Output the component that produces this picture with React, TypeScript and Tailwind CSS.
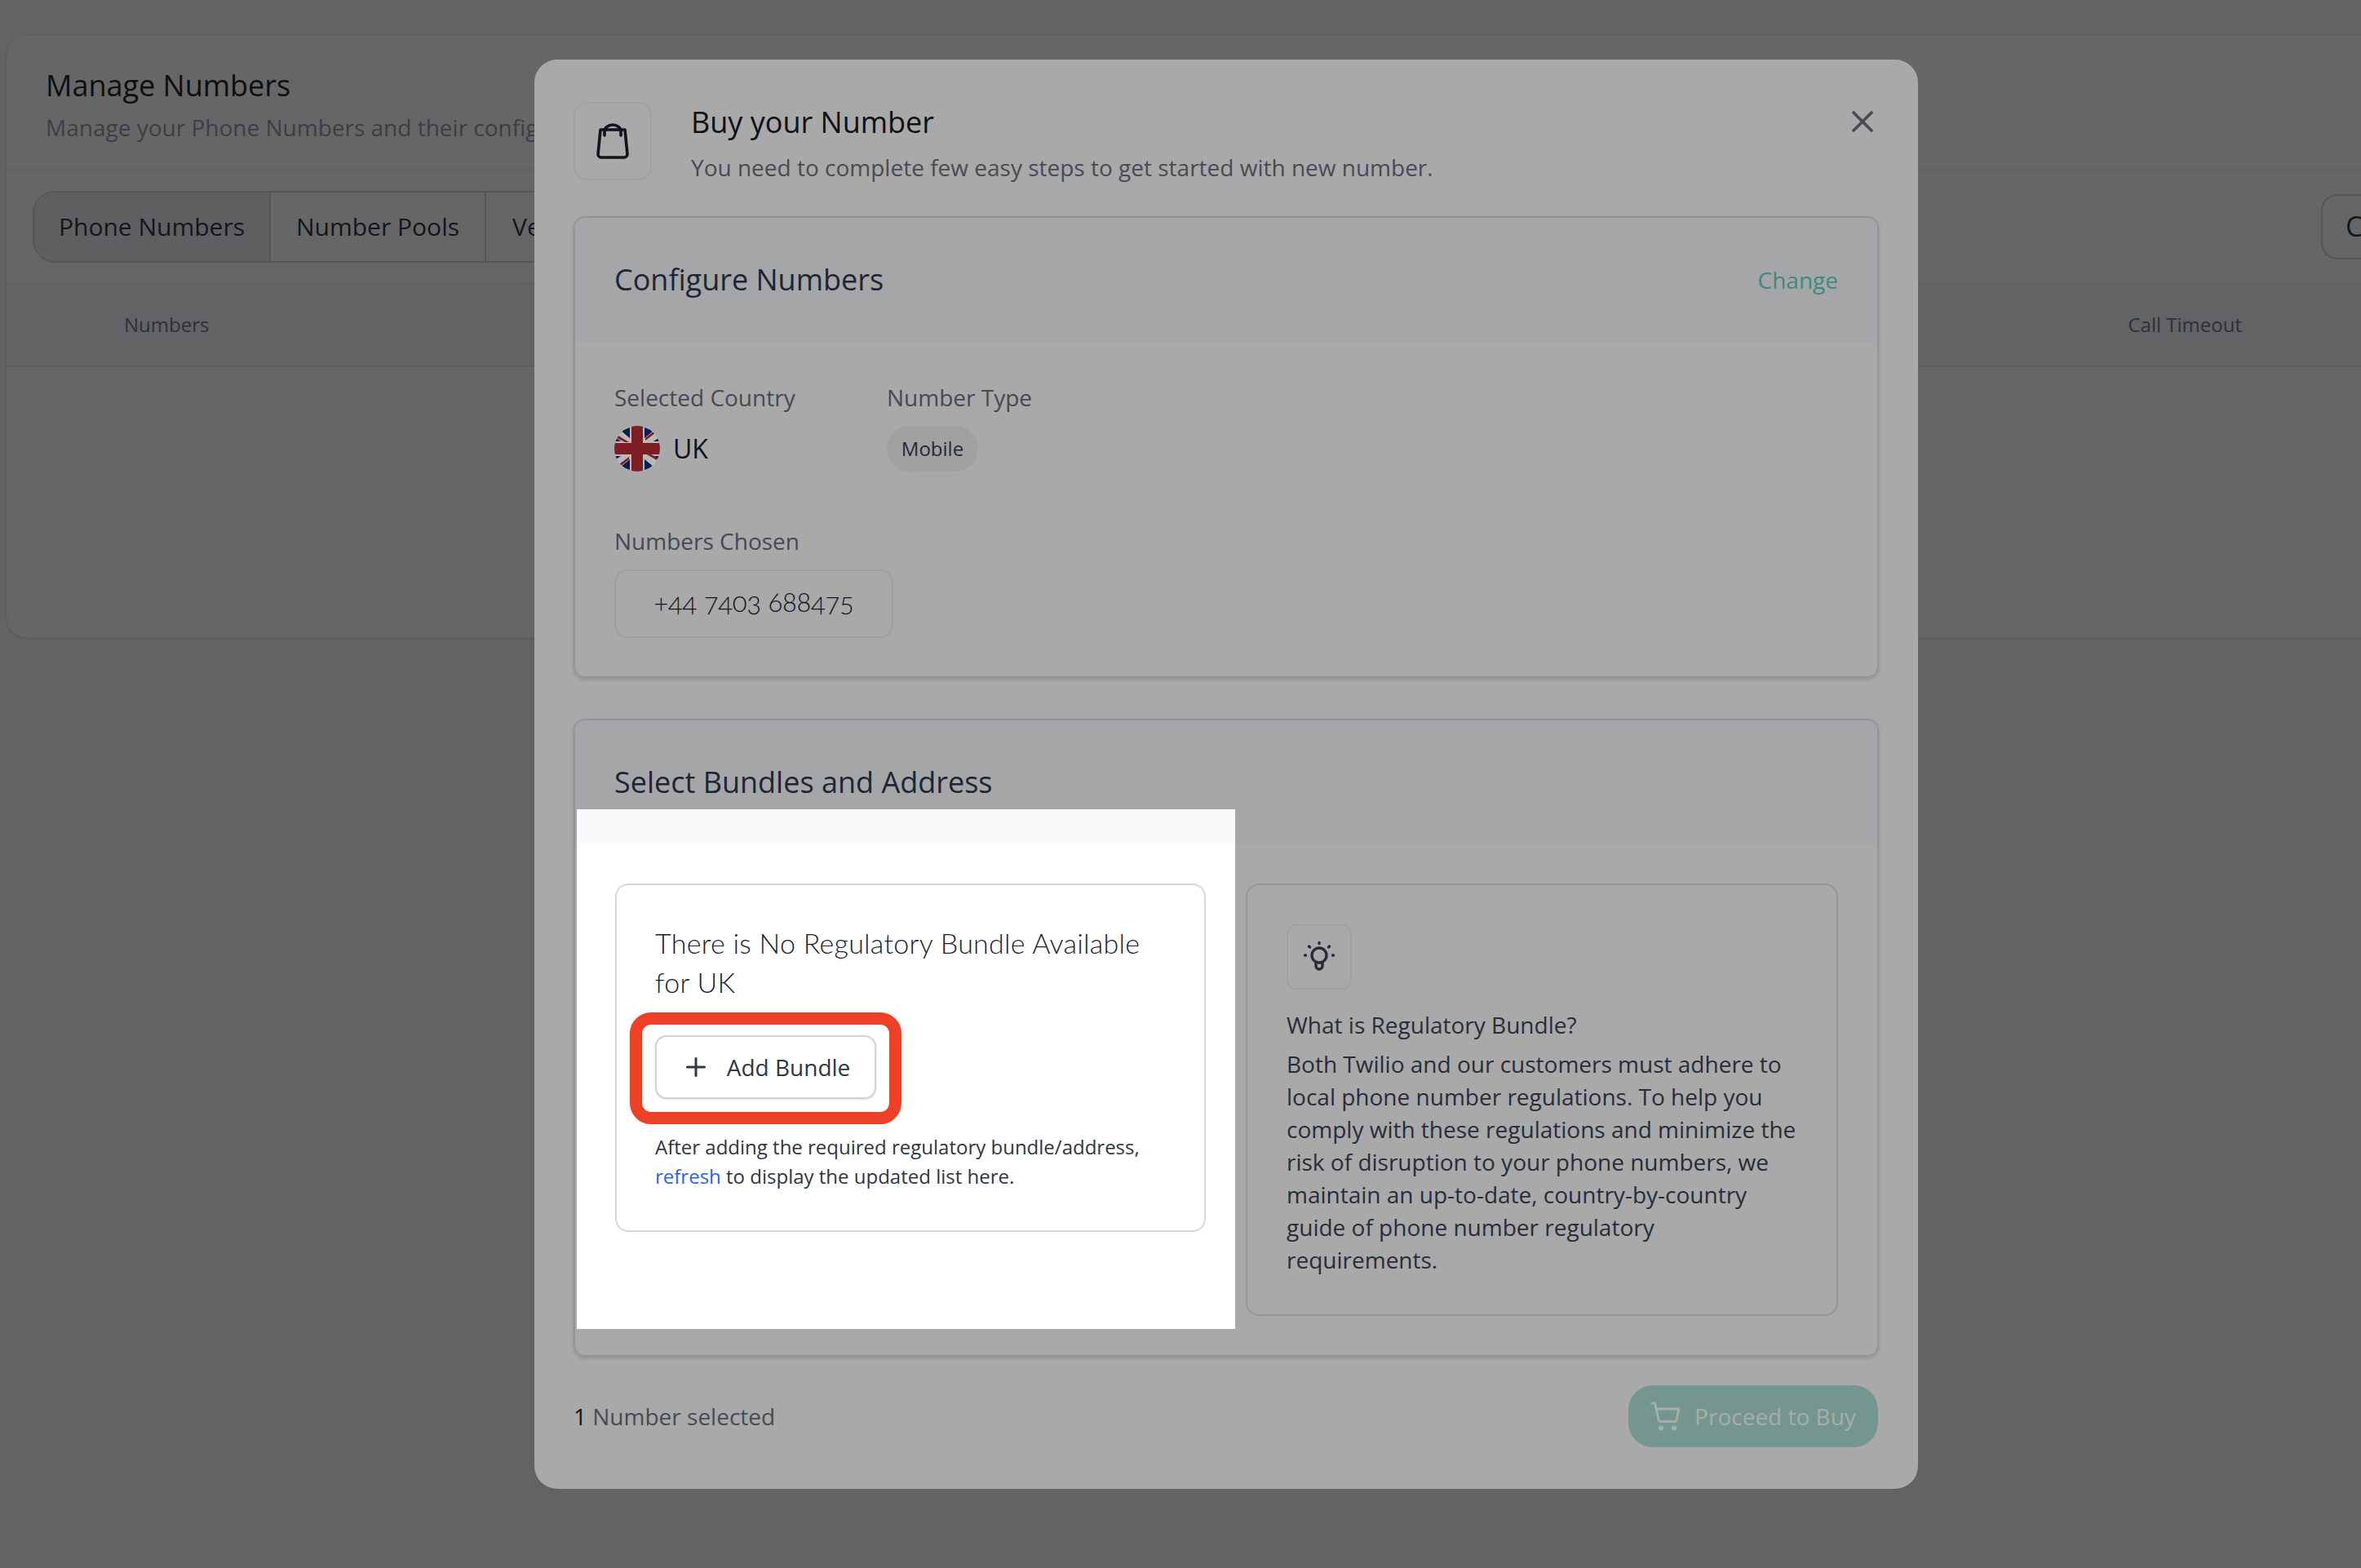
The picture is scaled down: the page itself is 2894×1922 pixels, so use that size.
import React from 'react';
import { Plus, X } from 'lucide-react';

const BagIcon = () => (
  <svg width="40" height="44" viewBox="0 0 40 44" fill="none" stroke="#10141c" strokeWidth="3.600" strokeLinecap="round" strokeLinejoin="round">
    <path d="M5 8h30l3 30a4 4 0 0 1-4 4H6a4 4 0 0 1-4-4z" />
    <path d="M10 15V10a10 8 0 0 1 20 0v5" />
  </svg>
);

const BulbIcon = () => (
  <svg width="40" height="40" viewBox="0 0 40 40" fill="none" stroke="#262c3a" strokeWidth="3.400" strokeLinecap="round" strokeLinejoin="round">
    <circle cx="20" cy="18" r="9" />
    <path d="M16 27v4a4 4 0 0 0 8 0v-4" />
    <path d="M20 2.500v1M7.500 7l1 1M32.500 7l-1 1M2.500 18h1M36.500 18h1" />
  </svg>
);

const CartIcon = () => (
  <svg width="38" height="36" viewBox="0 0 38 36" fill="none" stroke="#a6aeaa" strokeWidth="3" strokeLinecap="round" strokeLinejoin="round">
    <path d="M1.500 2h4l4.500 20a3 3 0 0 0 3 2.500h16a3 3 0 0 0 3-2.500l3-13H7" />
    <circle cx="13" cy="32.500" r="1.500" fill="#a6aeaa" />
    <circle cx="29" cy="32.500" r="1.500" fill="#a6aeaa" />
  </svg>
);

const UkFlag = () => (
  <svg width="56" height="56" viewBox="0 0 56 56">
    <defs>
      <clipPath id="flag-circle">
        <circle cx="28" cy="28" r="28" />
      </clipPath>
    </defs>
    <g clipPath="url(#flag-circle)">
      <rect width="56" height="56" fill="#b9b9b9" />
      <path d="M19 2v13L8 6zM37 2v13L48 6zM19 54V41L8 50zM37 54V41l11 9zM1 19h7l-6-4zM55 19h-7l6-4zM1 37h7l-6 4zM55 37h-7l6 4z" fill="#0c1c55" />
      <path d="M5 12l13 8h-5L3 15zM50 9L38 18v-3l10-8zM6 47l12-9v3L8 49zM52 42l-14-8h5l10 5z" fill="#7f1d24" />
      <rect x="21" width="14" height="56" fill="#7f1d24" />
      <rect y="21" width="56" height="14" fill="#7f1d24" />
    </g>
  </svg>
);

const helpLines = 'Both Twilio and our customers must adhere to local phone number regulations. To help you comply with these regulations and minimize the risk of disruption to your phone numbers, we maintain an up-to-date, country-by-country guide of phone number regulatory requirements.';

export default function App() {
  return (
    <div className="relative w-[2894px] h-[1922px] overflow-hidden bg-[#626365] pt-[43px] pl-[8px] font-['Open_Sans',sans-serif]">
      {/* page behind the dialog */}
      <div className="w-[2950px] h-[739px] rounded-l-[24px] border border-[#626262] bg-[#666666] shadow-sm">
        <div className="h-[165px] border-b-2 border-[#616161] pl-[47px] pt-[37px]">
          <h1 className="text-[36px] leading-[48px] text-[#0d0f12]">Manage Numbers</h1>
          <p className="mt-[7px] text-[28px] leading-[40px] text-[#3b3e48]">Manage your Phone Numbers and their configurations</p>
        </div>
        <div className="h-[139px] border-b-2 border-[#616161] pl-[31px] flex items-center justify-between">
          <div className="flex h-[88px] rounded-[28px] border-2 border-[#565658] text-[30px] text-[#13161d]">
            <div className="w-[290px] flex items-center justify-center rounded-l-[28px] bg-[#5f5f61] border-r-2 border-[#565658]">Phone Numbers</div>
            <div className="w-[264px] flex items-center justify-center border-r-2 border-[#565658]">Number Pools</div>
            <div className="pl-[32px] pr-[32px] flex items-center border-r-2 border-[#565658]">Verified Caller IDs</div>
          </div>
          <div className="w-[112px] h-[80px] rounded-l-[20px] border-2 border-r-0 border-[#565658] pl-[28px] flex items-center text-[34px] text-[#13161d] overflow-hidden">Create</div>
        </div>
        <div className="h-[102px] border-b-2 border-[#5c5c5c] bg-[#626365] flex items-center pl-[143px] pr-[209px] justify-between text-[24px] text-[#2e3038]">
          <span>Numbers</span>
          <span>Call Timeout</span>
        </div>
      </div>

      {/* dialog */}
      <div className="absolute left-[655px] top-[73px] w-[1696px] h-[1752px] rounded-[28px] bg-[#a9a9a9] px-[48px] flex flex-col">
        <div className="pt-[52px] flex items-start">
          <div className="w-[96px] h-[96px] rounded-[16px] border-2 border-[#a0a1a3] flex items-center justify-center">
            <BagIcon />
          </div>
          <div className="ml-[48px]">
            <h2 className="text-[36px] leading-[50px] text-[#0d1118]">Buy your Number</h2>
            <p className="mt-[8px] text-[28px] leading-[44px] text-[#484b56]">You need to complete few easy steps to get started with new number.</p>
          </div>
          <X className="ml-auto -mr-[2px] mt-[2px]" size={44} color="#484b56" strokeWidth={2} />
        </div>

        <div className="mt-[38px] h-[566px] rounded-[14px] border-2 border-[#93949b] shadow-[0_2px_4px_rgba(0,0,0,0.15)] overflow-hidden shrink-0">
          <div className="h-[151px] bg-[#a5a6a8] px-[48px] flex items-center justify-between">
            <span className="text-[36px] text-[#1f2533]">Configure Numbers</span>
            <span className="text-[28px] text-[#3f8a7d]">Change</span>
          </div>
          <div className="px-[48px] pt-[49px]">
            <div className="flex">
              <div className="w-[334px]">
                <div className="text-[28px] leading-[40px] text-[#454955]">Selected Country</div>
                <div className="mt-[15px] flex items-center gap-[16px]">
                  <UkFlag />
                  <span className="text-[32px] text-[#0d1118]">UK</span>
                </div>
              </div>
              <div>
                <div className="text-[28px] leading-[40px] text-[#454955]">Number Type</div>
                <div className="mt-[15px] h-[56px] w-[112px] rounded-full bg-[#a1a1a2] flex items-center justify-center text-[24px] text-[#232836]">Mobile</div>
              </div>
            </div>
            <div className="mt-[65px] text-[28px] leading-[40px] text-[#454955]">Numbers Chosen</div>
            <div className="mt-[15px] pb-[4px] w-[342px] h-[84px] rounded-[16px] border-2 border-[#9d9d9f] flex items-center justify-center font-['Lato',sans-serif] font-light oldstyle-nums text-[33px] tracking-[-0.3px] text-[#11151f]">+44 7403 688475</div>
          </div>
        </div>

        <div className="mt-[50px] h-[782px] rounded-[14px] border-2 border-[#93949b] shadow-[0_2px_4px_rgba(0,0,0,0.15)] overflow-hidden shrink-0">
          <div className="h-[151px] bg-[#a5a6a8] px-[48px] pt-[51px]">
            <span className="text-[36px] leading-[50px] text-[#1f2533]">Select Bundles and Address</span>
          </div>
          <div className="pt-[49px] pl-[822px]">
            <div className="w-[726px] h-[530px] rounded-[16px] border-2 border-[#95969c] px-[48px] pt-[48px]">
              <div className="w-[80px] h-[80px] rounded-[12px] border-2 border-[#a0a1a3] flex items-center justify-center">
                <BulbIcon />
              </div>
              <h3 className="mt-[22px] text-[28px] leading-[42px] text-[#272d3b]">What is Regulatory Bundle?</h3>
              <p className="mt-[7px] text-[28px] leading-[40px] text-[#272d3b]">{helpLines}</p>
            </div>
          </div>
        </div>

        <div className="mt-[35px] flex items-center justify-between">
          <span className="text-[28px] text-[#484b56]"><span className="text-[#12151c]">1</span> Number selected</span>
          <button className="mr-[1px] w-[306px] h-[76px] rounded-[30px] bg-[#74968f] flex items-center justify-center gap-[16px] text-[28px] text-[#a6aeaa]">
            <CartIcon />
            Proceed to Buy
          </button>
        </div>

        {/* highlighted part of the page */}
        <div className="absolute left-[52px] top-[919px] w-[807px] h-[637px] bg-white">
          <div className="h-[42px] bg-[#f9fafb]" />
          <div className="ml-[47px] mt-[49px] w-[724px] h-[427px] rounded-[16px] border-2 border-[#d5d8de] px-[47px] pt-[47px]">
            <div className="font-['Lato',sans-serif] font-light text-[34px] leading-[48px] tracking-[0.27px] text-[#1c2230]">There is No Regulatory Bundle Available for UK</div>
            <div className="relative mt-[41px] w-[271px] h-[78px]">
              <div className="absolute -left-[31px] -right-[31px] -top-[28px] -bottom-[31px] rounded-[26px] border-[15px] border-[#ee4026]" />
              <button className="w-full h-full rounded-[14px] border-2 border-[#d0d3db] bg-white shadow-sm flex items-center justify-center gap-[20px] text-[28px] text-[#2f3644]">
                <Plus size={36} color="#2f3644" strokeWidth={2} />
                Add Bundle
              </button>
            </div>
            <p className="mt-[41px] text-[24px] leading-[36px] text-[#2f3644]">After adding the required regulatory bundle/address, <span className="text-[#2b63e8]">refresh</span> to display the updated list here.</p>
          </div>
        </div>
      </div>
    </div>
  );
}
